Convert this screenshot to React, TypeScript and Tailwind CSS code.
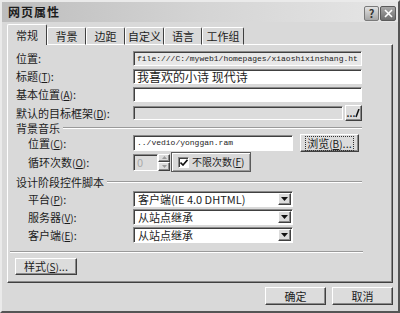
const cjk = "font-['Noto_Sans_CJK_SC',sans-serif]";
const mono = "font-['Liberation_Mono',monospace]";
const raised =
  "border border-t-white border-l-white border-r-[#404040] border-b-[#404040] shadow-[inset_-1px_-1px_0_#8a8a8a]";
const sunken =
  "border border-t-[#8a8a8a] border-l-[#8a8a8a] border-r-white border-b-white shadow-[inset_1px_1px_0_#404040]";

function K({ c }: { c: string }) {
  return (
    <span className="text-[10px]">
      (<span className="underline">{c}</span>)
    </span>
  );
}

function Row({
  label,
  sub,
  cls,
  children,
}: {
  label: React.ReactNode;
  sub?: boolean;
  cls?: string;
  children?: React.ReactNode;
}) {
  return (
    <div className={`flex items-center ${cls ?? ""}`}>
      <div className={`w-[125px] shrink-0 ${sub ? "pl-[20px]" : "pl-[8px]"} leading-none whitespace-nowrap`}>
        {label}
      </div>
      {children}
    </div>
  );
}

function Header({ text, cls }: { text: string; cls?: string }) {
  return (
    <div className={`flex items-center h-[12px] pl-[8px] ${cls ?? ""}`}>
      <span className="leading-none mr-[3px]">{text}</span>
      <div className="flex-1 mr-[30px] border-t border-t-[#9a9a9a] border-b border-b-white" />
    </div>
  );
}

function Select({ value }: { value: string }) {
  return (
    <div className={`w-[160px] h-[16px] bg-white flex items-center ${sunken}`}>
      <span className="flex-1 pl-[4px] text-[11px] leading-none whitespace-nowrap">{value}</span>
      <div className={`w-[13px] h-[12px] mr-[1px] bg-[#dcdcdc] flex items-center justify-center ${raised}`}>
        <svg width="7" height="4" viewBox="0 0 7 4">
          <path d="M0 0h7L3.5 4z" fill="#111" />
        </svg>
      </div>
    </div>
  );
}

export default function App() {
  return (
    <div
      className={`w-[400px] h-[313px] bg-[#d9d9d9] flex flex-col ${cjk} text-[11px] text-[#1c1c1c] border-2 border-t-[#eaeaea] border-l-[#eaeaea] border-r-[#555] border-b-[#555] overflow-hidden`}
    >
      {/* title bar */}
      <div className="h-[20px] flex items-center bg-gradient-to-r from-[#bdbdbd] via-[#d4d4d4] to-[#e6e6e6] pl-[6px] pr-[2px]">
        <span className="font-bold text-[12px] leading-none tracking-[1px]">网页属性</span>
        <div className="ml-auto flex gap-[1px] mt-[2px]">
          <div className="w-[15px] h-[15px] flex items-center justify-center bg-gradient-to-b from-[#e2e2e2] to-[#a6a6a6] border border-[#7a7a7a] rounded-[2px] text-[11px] font-bold leading-none text-[#333]">
            ?
          </div>
          <div className="w-[16px] h-[15px] flex items-center justify-center bg-gradient-to-b from-[#a8a8a8] to-[#6e6e6e] border border-[#5a5a5a] rounded-[2px]">
            <svg width="9" height="9" viewBox="0 0 9 9">
              <path d="M1 1l7 7M8 1l-7 7" stroke="#fff" strokeWidth="1.6" />
            </svg>
          </div>
        </div>
      </div>

      {/* tabs */}
      <div className="flex items-end h-[22px] ml-[5px] mt-[1px] -mb-px relative z-10">
        <div className="h-[21px] w-[40px] flex items-center justify-center bg-[#d9d9d9] border-t border-l border-t-white border-l-white border-r border-r-[#404040] rounded-t-[2px]">
          常规
        </div>
        {[
          ["背景", "w-[39px]"],
          ["边距", "w-[39px]"],
          ["自定义", "w-[39px]"],
          ["语言", "w-[38px]"],
          ["工作组", "w-[42px]"],
        ].map(([t, w]) => (
          <div
            key={t}
            className={`h-[18px] ${w} flex items-center justify-center border-t border-l border-t-white border-l-white border-r border-r-[#404040] rounded-t-[2px] border-b border-b-white`}
          >
            {t}
          </div>
        ))}
      </div>

      {/* panel */}
      <div className="ml-[5px] w-[386px] h-[239px] flex flex-col border border-t-white border-l-white border-r-[#404040] border-b-[#404040] shadow-[inset_-1px_-1px_0_#8a8a8a]">
        <Row label="位置:" cls="mt-[6px] h-[15px]">
          <div className={`w-[229px] h-[15px] bg-[#e8e8e8] flex items-center pl-[3px] overflow-hidden ${sunken}`}>
            <span className={`${mono} text-[8px] leading-none whitespace-nowrap`}>
              file:///C:/myweb1/homepages/xiaoshixinshang.ht
            </span>
          </div>
        </Row>
        <Row label={<>标题<K c="T" />:</>} cls="mt-[3px] h-[15px]">
          <div className={`w-[229px] h-[15px] bg-white flex items-center pl-[3px] ${sunken}`}>
            <span className="text-[12px] leading-none whitespace-nowrap">我喜欢的小诗 现代诗</span>
          </div>
        </Row>
        <Row label={<>基本位置<K c="A" />:</>} cls="mt-[3px] h-[15px]">
          <div className={`w-[229px] h-[15px] bg-white ${sunken}`} />
        </Row>
        <Row label={<>默认的目标框架<K c="D" />:</>} cls="mt-[3px] h-[16px]">
          <div className={`w-[210px] h-[14px] bg-[#dcdcdc] ${sunken}`} />
          <div className={`ml-[2px] w-[17px] h-[16px] flex items-end justify-center pb-[2px] bg-[#dcdcdc] ${raised}`}>
            <span className="text-[9px] leading-none font-bold">...</span>
            <svg width="5" height="9" viewBox="0 0 5 9">
              <path d="M4 0L1 8" stroke="#111" strokeWidth="1.5" />
            </svg>
          </div>
        </Row>

        <Header text="背景音乐" cls="mt-[1px]" />
        <Row label={<>位置<K c="C" />:</>} sub cls="h-[18px]">
          <div className={`w-[160px] h-[16px] bg-white flex items-center pl-[3px] ${sunken}`}>
            <span className={`${mono} text-[8px] leading-none`}>../vedio/yonggan.ram</span>
          </div>
          <div className={`ml-[7px] w-[59px] h-[18px] flex items-center justify-center bg-[#dcdcdc] ${raised}`}>
            <span className="leading-none outline outline-1 outline-dotted outline-[#333] px-[1px] py-[1px]">
              浏览<K c="B" />...
            </span>
          </div>
        </Row>
        <Row label={<>循环次数<K c="O" />:</>} sub cls="h-[20px]">
          <div className={`w-[25px] h-[17px] bg-[#dcdcdc] flex items-center pl-[3px] text-[11px] text-[#aaa] ${sunken}`}>
            0
          </div>
          <div className="w-[12px] h-[17px] flex flex-col">
            <div className={`flex-1 flex items-center justify-center bg-[#dcdcdc] ${raised}`}>
              <svg width="5" height="3" viewBox="0 0 5 3">
                <path d="M2.5 0L5 3H0z" fill="#9a9a9a" />
              </svg>
            </div>
            <div className={`flex-1 flex items-center justify-center bg-[#dcdcdc] ${raised}`}>
              <svg width="5" height="3" viewBox="0 0 5 3">
                <path d="M0 0h5L2.5 3z" fill="#9a9a9a" />
              </svg>
            </div>
          </div>
          <div className="ml-[1px] w-[80px] h-[20px] flex items-center pl-[6px] border border-[#5a5a5a] shadow-[inset_1px_1px_0_#fff,inset_-1px_-1px_0_#9a9a9a]">
            <div className={`w-[11px] h-[11px] shrink-0 bg-white flex items-center justify-center ${sunken}`}>
              <svg width="8" height="7" viewBox="0 0 8 7">
                <path d="M0.5 3.5L3 6L7.5 0.8" stroke="#111" strokeWidth="1.6" fill="none" />
              </svg>
            </div>
            <span className="ml-[3px] text-[10px] leading-none whitespace-nowrap">
              不限次数<K c="F" />
            </span>
          </div>
        </Row>

        <Header text="设计阶段控件脚本" cls="mt-[4px]" />
        <Row label={<>平台<K c="P" />:</>} sub cls="mt-[3px] h-[16px]">
          <Select value="客户端(IE 4.0 DHTML)" />
        </Row>
        <Row label={<>服务器<K c="V" />:</>} sub cls="mt-[2px] h-[16px]">
          <Select value="从站点继承" />
        </Row>
        <Row label={<>客户端<K c="E" />:</>} sub cls="mt-[2px] h-[16px]">
          <Select value="从站点继承" />
        </Row>

        <div className="mt-[8px] ml-[2px] w-[353px] border-t border-t-[#9a9a9a] border-b border-b-white" />
        <div className="mt-[5px] ml-[7px]">
          <div className={`w-[62px] h-[17px] flex items-center justify-center bg-[#dcdcdc] ${raised}`}>
            <span className="leading-none">
              样式<K c="S" />...
            </span>
          </div>
        </div>
      </div>

      {/* bottom buttons */}
      <div className="flex justify-end gap-[6px] mt-[4px] pr-[5px]">
        <div className={`w-[61px] h-[18px] flex items-center justify-center bg-[#dcdcdc] ${raised}`}>确定</div>
        <div className={`w-[61px] h-[18px] flex items-center justify-center bg-[#dcdcdc] ${raised}`}>取消</div>
      </div>
    </div>
  );
}
